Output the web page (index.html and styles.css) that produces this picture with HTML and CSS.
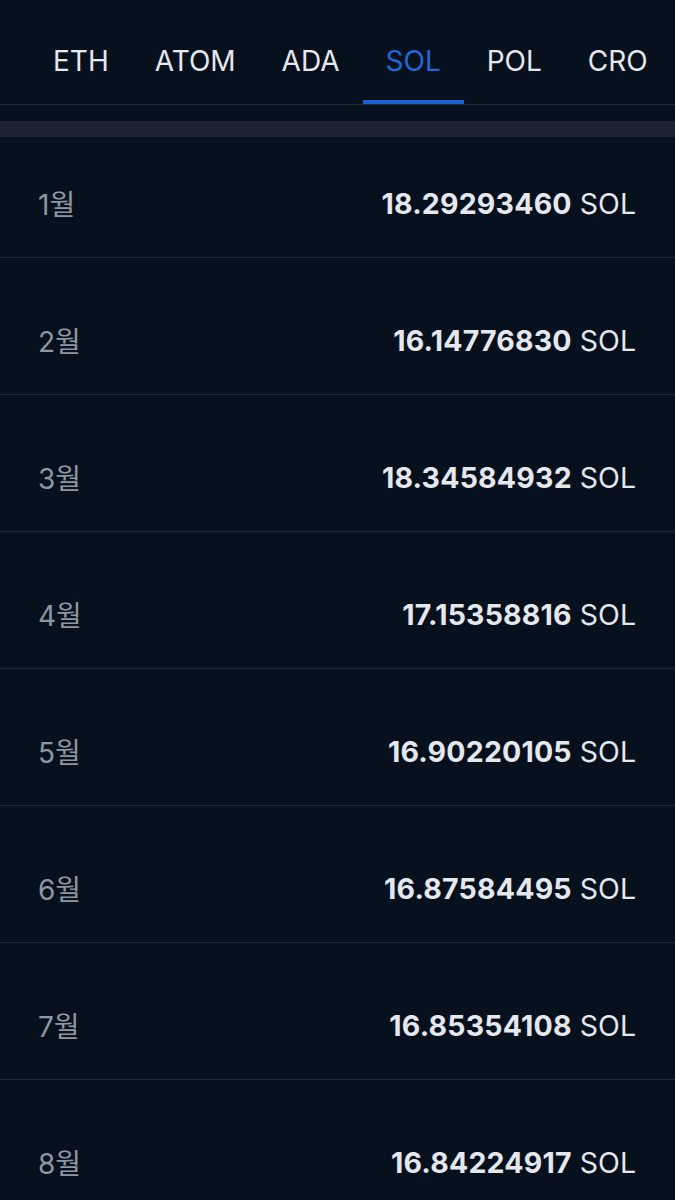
FILE: index.html
```
<!DOCTYPE html>
<html lang="ko">
<head>
  <meta charset="UTF-8">
  <meta name="viewport" content="width=device-width, initial-scale=1.0">
  <title>Monthly Rewards</title>
  <link rel="stylesheet" href="styles.css">
</head>
<body>
  <div class="tabs">
    <div class="tab">ETH</div>
    <div class="tab">ATOM</div>
    <div class="tab">ADA</div>
    <div class="tab active">SOL</div>
    <div class="tab">POL</div>
    <div class="tab">CRO</div>
  </div>
  <div class="spacer"></div>
  <div class="band"></div>

  <ul class="rows">
    <li class="row first"><span class="month">1월</span><span class="amount"><b>18.29293460</b> SOL</span></li>
    <li class="row"><span class="month">2월</span><span class="amount"><b>16.14776830</b> SOL</span></li>
    <li class="row"><span class="month">3월</span><span class="amount"><b>18.34584932</b> SOL</span></li>
    <li class="row"><span class="month">4월</span><span class="amount"><b>17.15358816</b> SOL</span></li>
    <li class="row"><span class="month">5월</span><span class="amount"><b>16.90220105</b> SOL</span></li>
    <li class="row"><span class="month">6월</span><span class="amount"><b>16.87584495</b> SOL</span></li>
    <li class="row"><span class="month">7월</span><span class="amount"><b>16.85354108</b> SOL</span></li>
    <li class="row"><span class="month">8월</span><span class="amount"><b>16.84224917</b> SOL</span></li>
  </ul>
</body>
</html>
```

FILE: styles.css
```
body {
  margin: 0;
  background: #07111e;
  font-family: Inter, "Noto Sans CJK KR", sans-serif;
  color: #e4e7ec;
  overflow: hidden;
}

.tabs {
  display: flex;
  padding: 0 0 0 30px;
  height: 104px;
  border-bottom: 1px solid #1f2937;
  white-space: nowrap;
}

.tab {
  padding: 0 23px;
  font-size: 28px;
  height: 104px;
  line-height: 122px;
  color: #e6e8ec;
  box-sizing: border-box;
  border-bottom: 4px solid transparent;
}

.tab.active {
  color: #1f68d8;
  border-bottom-color: #1a62d4;
}

.spacer {
  height: 16px;
}

.band {
  height: 16px;
  background: #1c2432;
}

.rows {
  list-style: none;
  margin: 0;
  padding: 0;
}

.row {
  display: flex;
  justify-content: space-between;
  align-items: center;
  height: 137px;
  padding: 28px 39px 0 38px;
  box-sizing: border-box;
  border-bottom: 1px solid #1f2937;
}

.row.first {
  height: 121px;
  padding-top: 12px;
}

.month {
  font-size: 28px;
  color: #8f96a1;
}

.amount {
  font-size: 28.5px;
  color: #e4e7ec;
}

.amount b {
  font-weight: 700;
  letter-spacing: 0.2px;
}
```
